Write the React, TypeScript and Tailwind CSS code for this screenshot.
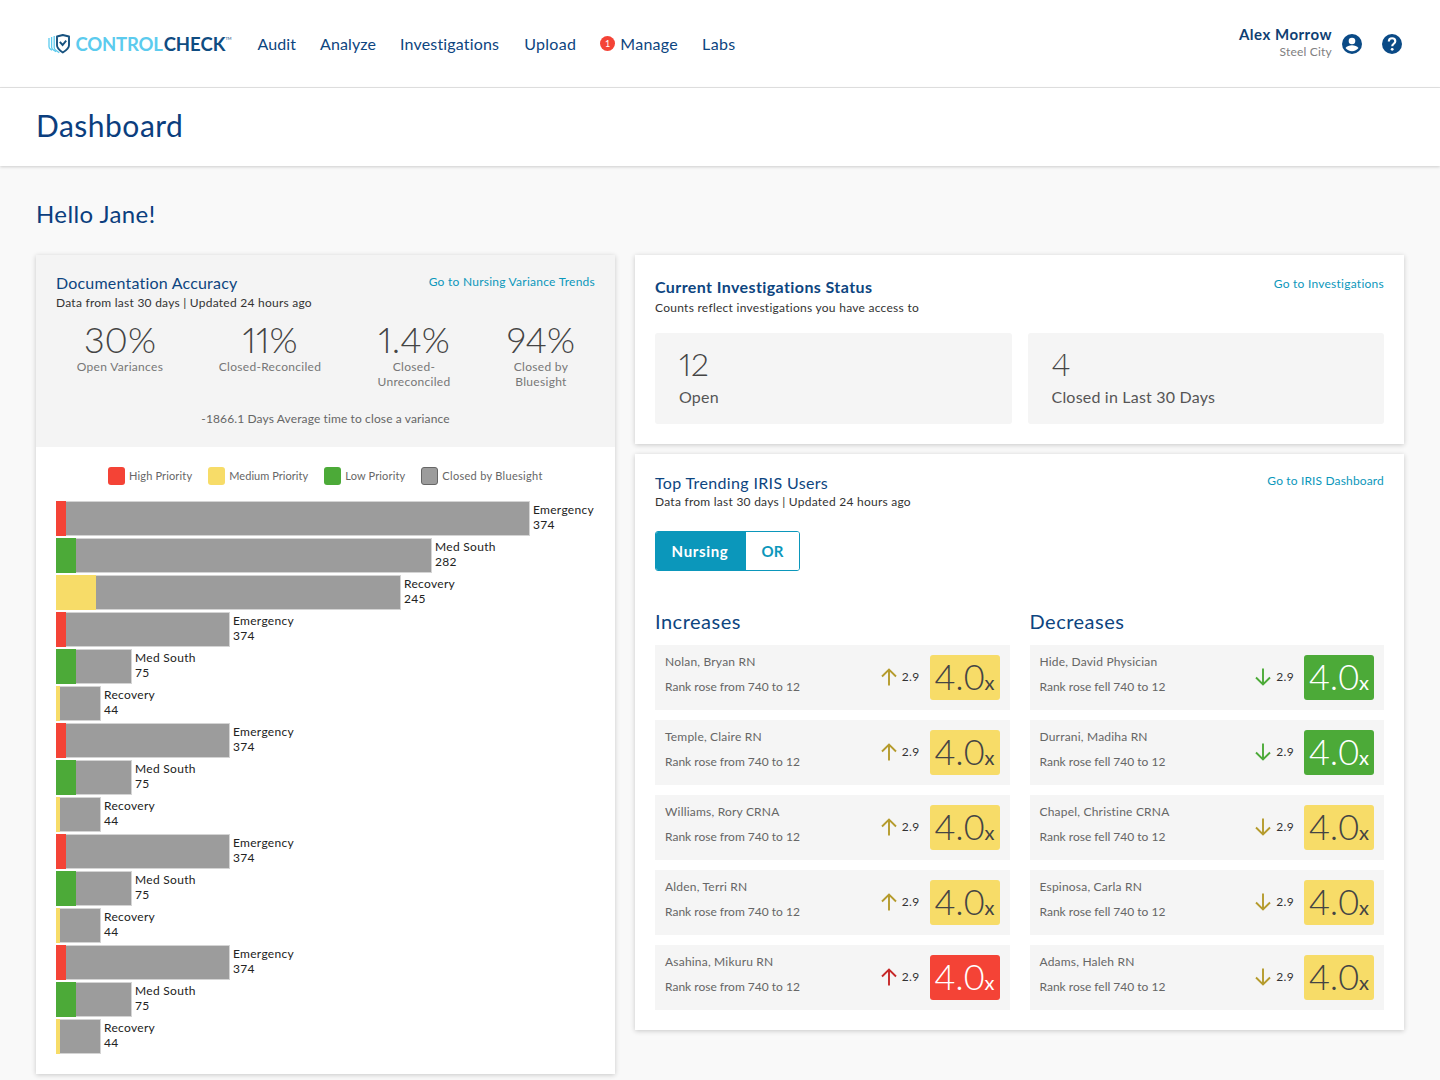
import React from "react";

const font = { fontFamily: '"Lato", "Liberation Sans", sans-serif' };

function Logo() {
  return (
    <div className="flex items-center translate-y-[1px]">
      <svg width="22" height="22" viewBox="0 0 22 22" className="mr-[5.500px]" fill="none">
        <path d="M1 4v8.500c0 1.200.5 2 1.400 2.600l1.600 1.100" stroke="#5ccbee" strokeWidth="1.300" />
        <path d="M3.600 3v10c0 1.300.6 2.200 1.500 2.800l3 2" stroke="#5ccbee" strokeWidth="1.300" />
        <path d="M6.200 2v11.500c0 1.300.7 2.200 1.600 2.800l3.500 2.400" stroke="#5ccbee" strokeWidth="1.300" />
        <path d="M9 2.500 14.800 1 21 2.500v8.800c0 2.800-2.300 4.800-6.200 7.200-3.800-2.400-5.800-4.400-5.800-7.200z" fill="#fff" stroke="#17527f" strokeWidth="1.900" strokeLinejoin="round" />
        <path d="m11.800 7.800 2.800 3.200 3.600-4.300" stroke="#17527f" strokeWidth="1.900" />
      </svg>
      <span className="text-[18.500px] font-bold tracking-[-0.2px] leading-none text-[#5ccbee]">CONTROL</span>
      <span className="text-[18.500px] font-bold tracking-[0px] ml-[1px] leading-none text-[#0f4c81]">CHECK</span>
      <span className="text-[4px] text-[#0f4c81] self-start mt-[2px]">TM</span>
    </div>
  );
}

function Header() {
  return (
    <header className="h-[88px] bg-white border-b border-[#e4e4e4] flex items-center pl-[48px] pr-[36px]">
      <Logo />
      <nav className="flex items-center ml-[26px] text-[16px] text-[#0d4580] tracking-[0.3px]">
        <span className="mr-[24px] tracking-[0.1px]">Audit</span>
        <span className="mr-[24px] tracking-[0.1px]">Analyze</span>
        <span className="mr-[25px] tracking-[0.17px]">Investigations</span>
        <span className="mr-[24px]">Upload</span>
        <span className="w-[15px] h-[15px] rounded-full bg-[#f44336] text-white text-[9px] flex items-center justify-center mr-[5px]">1</span>
        <span className="mr-[24px]">Manage</span>
        <span>Labs</span>
      </nav>
      <div className="ml-auto flex items-center">
        <div className="text-right mr-[8px] -mt-[3px]">
          <div className="text-[15px] font-bold text-[#0f3f73] leading-[20px] tracking-[0.5px]">Alex Morrow</div>
          <div className="text-[12px] text-[#808080] leading-[16px] tracking-[0.2px]">Steel City</div>
        </div>
        <svg width="24" height="24" viewBox="0 0 24 24" className="mr-[16px]">
          <circle cx="12" cy="12" r="10" fill="#0a4a86" />
          <circle cx="12" cy="9" r="3.300" fill="#fff" />
          <path d="M5.500 16c1.300-2 4-2.800 6.500-2.800s5.200.8 6.500 2.800c-1.500 2-3.800 3.200-6.500 3.200S7 18 5.500 16z" fill="#fff" />
        </svg>
        <svg width="24" height="24" viewBox="0 0 24 24">
          <circle cx="12" cy="12" r="10" fill="#0a4a86" />
          <path d="M8.800 9.500c0-2 1.500-3.200 3.300-3.200s3.200 1.100 3.200 2.900c0 2.500-3.100 2.500-3.100 5" fill="none" stroke="#fff" strokeWidth="2.100" />
          <circle cx="12.200" cy="17.300" r="1.400" fill="#fff" />
        </svg>
      </div>
    </header>
  );
}

function Stat({ v, l }: { v: string; l: string }) {
  return (
    <div className="flex flex-col items-center text-center">
      <div className="text-[36px] leading-[40px] text-[#444] font-light proportional-nums">{v}</div>
      <div className="text-[12px] leading-[15px] text-[#777] tracking-[0.3px] whitespace-pre-line">{l}</div>
    </div>
  );
}

type Bar = { color: string; c: number; w: number; name: string; n: number };
const big: Bar[] = [
  { color: "bg-[#f44336]", c: 10, w: 474, name: "Emergency", n: 374 },
  { color: "bg-[#4caa38]", c: 20, w: 376, name: "Med South", n: 282 },
  { color: "bg-[#f7dc68]", c: 40, w: 345, name: "Recovery", n: 245 },
];
const small: Bar[] = [
  { color: "bg-[#f44336]", c: 10, w: 174, name: "Emergency", n: 374 },
  { color: "bg-[#4caa38]", c: 20, w: 76, name: "Med South", n: 75 },
  { color: "bg-[#f7dc68]", c: 4, w: 45, name: "Recovery", n: 44 },
];
const bars = [...big, ...small, ...small, ...small, ...small];

function BarRow({ b }: { b: Bar }) {
  return (
    <div className="flex items-center h-[35px] mb-[2px]">
      <div className="flex h-full bg-[#9c9c9c] border-y border-r border-[#d4d4d4] box-border" style={{ width: b.w }}>
        <div className={`${b.color} -my-[1px]`} style={{ width: b.c }} />
      </div>
      <div className="ml-[3px] -mt-[3px] text-[12px] leading-[15px] text-[#222] tracking-[0.3px]">
        <div>{b.name}</div>
        <div>{b.n}</div>
      </div>
    </div>
  );
}

function Legend({ c, t, extra, track }: { c: string; t: string; extra?: string; track: string }) {
  return (
    <div className="flex items-center">
      <span className={`w-[17px] h-[18px] rounded-[3px] ${c} ${extra ?? ""}`} />
      <span className={`ml-[4px] text-[11px] text-[#666] ${track}`}>{t}</span>
    </div>
  );
}

function LeftCard() {
  return (
    <section className="w-[579px] h-[819px] bg-white shadow-[0_1px_5px_rgba(0,0,0,0.2)] shrink-0">
      <div className="h-[192px] bg-[#f4f4f4] pt-[19px] px-[20px]">
        <div className="flex justify-between items-start">
          <div>
            <div className="text-[16px] leading-[18px] text-[#0d4580] tracking-[0.2px]">Documentation Accuracy</div>
            <div className="text-[12px] leading-[16px] mt-[3px] text-[#333] tracking-[0.25px]">Data from last 30 days | Updated 24 hours ago</div>
          </div>
          <div className="text-[12px] leading-[14px] mt-[1px] text-[#0b97bb] tracking-[0.25px]">Go to Nursing Variance Trends</div>
        </div>
        <div className="grid grid-cols-[128px_172px_116px_138px] mt-[8px] h-[70px]">
          <Stat v="30%" l="Open Variances" />
          <Stat v="11%" l="Closed-Reconciled" />
          <Stat v="1.4%" l={"Closed-\nUnreconciled"} />
          <Stat v="94%" l={"Closed by\nBluesight"} />
        </div>
        <div className="text-center text-[12px] text-[#666] tracking-[0.12px] mt-[21px]">-1866.1 Days Average time to close a variance</div>
      </div>
      <div className="pt-[20px] px-[20px]">
        <div className="flex gap-[16px] ml-[52px]">
          <Legend c="bg-[#f44336]" t="High Priority" track="tracking-[0.15px]" />
          <Legend c="bg-[#f7dc68]" t="Medium Priority" track="tracking-[0.05px]" />
          <Legend c="bg-[#4caa38]" t="Low Priority" track="tracking-[0.15px]" />
          <Legend c="bg-[#9c9c9c]" extra="border border-[#666]" t="Closed by Bluesight" track="tracking-[0.3px]" />
        </div>
        <div className="mt-[16px]">
          {bars.map((b, i) => (
            <BarRow key={i} b={b} />
          ))}
        </div>
      </div>
    </section>
  );
}

function StatusBox({ v, l }: { v: string; l: string }) {
  return (
    <div className="flex-1 h-[91px] bg-[#f5f5f5] rounded-[3px] pl-[24px] pt-[12px]">
      <div className="text-[32px] leading-[38px] text-[#444] font-light proportional-nums">{v}</div>
      <div className="text-[16px] leading-[20px] mt-[4px] text-[#555] tracking-[0.2px]">{l}</div>
    </div>
  );
}

function Arrow({ up, color }: { up: boolean; color: string }) {
  return (
    <svg width="18" height="18" viewBox="0 0 18 18" fill="none" stroke={color} strokeWidth="1.900" className="-mt-[2px]">
      {up ? <path d="M9 17.500V1.500M2 8.500l7-7 7 7" /> : <path d="M9 .5v16M2 9.500l7 7 7-7" />}
    </svg>
  );
}

function TrendRow({ name, sub, up, color, badge, text }: { name: string; sub: string; up: boolean; color: string; badge: string; text: string }) {
  return (
    <div className="h-[65px] bg-[#f5f5f5] flex items-center pl-[10px] pr-[10px]">
      <div className="flex-1 text-[12px] text-[#666] pb-[8px]">
        <div className="leading-[15px] tracking-[0.2px]">{name}</div>
        <div className="leading-[15px] mt-[10px]">{sub}</div>
      </div>
      <Arrow up={up} color={color} />
      <span className="text-[12px] text-[#333] ml-[4px] mr-[10px] -mt-[2px] tracking-[0.3px]">2.9</span>
      <div className={`w-[70px] h-[45px] rounded-[3px] flex items-baseline justify-center ${badge} ${text}`}>
        <span className="text-[36px] leading-[42px] font-light">4.0</span>
        <span className="text-[20px] leading-[42px]">x</span>
      </div>
    </div>
  );
}

const yellow = "bg-[#f7dc68]";
const incs = [
  ["Nolan, Bryan RN", "#b59b2d", yellow, "text-[#444]"],
  ["Temple, Claire RN", "#b59b2d", yellow, "text-[#444]"],
  ["Williams, Rory CRNA", "#b59b2d", yellow, "text-[#444]"],
  ["Alden, Terri RN", "#b59b2d", yellow, "text-[#444]"],
  ["Asahina, Mikuru RN", "#c62828", "bg-[#f44336]", "text-white"],
];
const decs = [
  ["Hide, David Physician", "#4caa38", "bg-[#4caa38]", "text-white"],
  ["Durrani, Madiha RN", "#4caa38", "bg-[#4caa38]", "text-white"],
  ["Chapel, Christine CRNA", "#b59b2d", yellow, "text-[#444]"],
  ["Espinosa, Carla RN", "#b59b2d", yellow, "text-[#444]"],
  ["Adams, Haleh RN", "#b59b2d", yellow, "text-[#444]"],
];

function RightColumn() {
  return (
    <div className="w-[769px] shrink-0 flex flex-col gap-[10px]">
      <section className="h-[189px] bg-white shadow-[0_1px_5px_rgba(0,0,0,0.2)] px-[20px] pt-[22px]">
        <div className="flex justify-between items-start">
          <div className="text-[16px] leading-[20px] font-bold text-[#0d4580] tracking-[0.4px]">Current Investigations Status</div>
          <div className="text-[12px] leading-[14px] text-[#0b97bb] tracking-[0.25px]">Go to Investigations</div>
        </div>
        <div className="text-[12px] leading-[16px] mt-[3px] text-[#333] tracking-[0.27px]">Counts reflect investigations you have access to</div>
        <div className="flex gap-[16px] mt-[17px]">
          <StatusBox v="12" l="Open" />
          <StatusBox v="4" l="Closed in Last 30 Days" />
        </div>
      </section>
      <section className="h-[576px] bg-white shadow-[0_1px_5px_rgba(0,0,0,0.2)] px-[20px] pt-[20px]">
        <div className="flex justify-between items-start">
          <div className="text-[16px] leading-[18px] text-[#0d4580] tracking-[0.35px]">Top Trending IRIS Users</div>
          <div className="text-[12px] leading-[14px] text-[#0b97bb] tracking-[0.15px]">Go to IRIS Dashboard</div>
        </div>
        <div className="text-[12px] leading-[16px] mt-[2px] text-[#333] tracking-[0.25px]">Data from last 30 days | Updated 24 hours ago</div>
        <div className="flex mt-[21px] w-[145px] h-[40px] rounded-[3px] border border-[#0b97bb] overflow-hidden text-[15px] font-bold">
          <div className="w-[90px] bg-[#0b97bb] text-white flex items-center justify-center tracking-[0.65px] pr-[2px]">Nursing</div>
          <div className="flex-1 bg-white text-[#0b97bb] flex items-center justify-center">OR</div>
        </div>
        <div className="grid grid-cols-2 gap-x-[20px] mt-[38px]">
          <div>
            <div className="text-[20px] leading-[24px] text-[#0d4580] tracking-[0.5px] mb-[12px]">Increases</div>
            <div className="flex flex-col gap-[10px]">
              {incs.map((r) => (
                <TrendRow key={r[0]} name={r[0]} sub="Rank rose from 740 to 12" up color={r[1]} badge={r[2]} text={r[3]} />
              ))}
            </div>
          </div>
          <div>
            <div className="text-[20px] leading-[24px] text-[#0d4580] tracking-[0.5px] mb-[12px]">Decreases</div>
            <div className="flex flex-col gap-[10px]">
              {decs.map((r) => (
                <TrendRow key={r[0]} name={r[0]} sub="Rank rose fell 740 to 12" up={false} color={r[1]} badge={r[2]} text={r[3]} />
              ))}
            </div>
          </div>
        </div>
      </section>
    </div>
  );
}

export default function App() {
  return (
    <div className="h-[1080px] overflow-hidden bg-[#f9f9f9]" style={font}>
      <Header />
      <div className="h-[78px] bg-white shadow-[0_1px_3px_rgba(0,0,0,0.18)] flex items-center pl-[36px] pb-[4px] relative">
        <h1 className="text-[30px] text-[#0b3e7e] tracking-[0.5px]">Dashboard</h1>
      </div>
      <div className="px-[36px]">
        <h2 className="text-[24px] leading-[28px] text-[#0b3e7e] pt-[34px] tracking-[0.4px]">Hello Jane!</h2>
        <div className="flex gap-[20px] mt-[27px]">
          <LeftCard />
          <RightColumn />
        </div>
      </div>
    </div>
  );
}
